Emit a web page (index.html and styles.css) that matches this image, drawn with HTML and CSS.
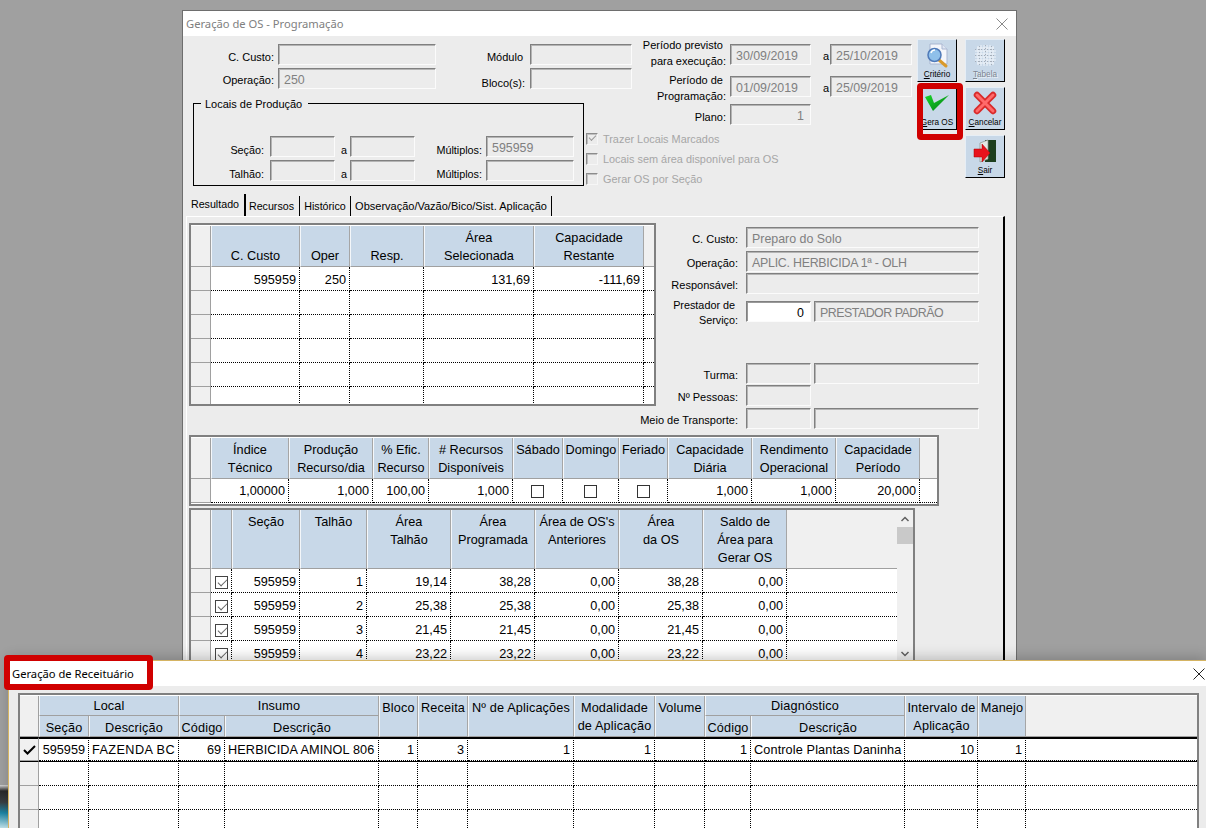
FILE: index.html
```html
<!DOCTYPE html>
<html lang="pt-BR">
<head>
<meta charset="utf-8">
<title>Geração de OS</title>
<link rel="stylesheet" href="styles.css">
</head>
<body>
<div class="desktop">
  <div class="wallpaper-bit"></div>

  <section class="win win1">
    <header class="titlebar inactive">
      <span class="ttl">Geração de OS - Programação</span>
      <svg class="close" width="12" height="12" viewBox="0 0 12 12"><path d="M.5.5l11 11M11.5.5l-11 11" stroke="#8a8a8a" fill="none"/></svg>
    </header>

    <div class="top">
      <div class="a-fields">
        <div class="lb l1">C. Custo:</div><div class="fd"></div><div class="lb l2 lmod">Módulo</div><div class="fd"></div>
        <div class="lb l1 lo">Operação:</div><div class="fd">250</div><div class="lb l2 lbl">Bloco(s):</div><div class="fd"></div>
      </div>

      <div class="a-group">
        <div class="legend">Locais de Produção</div>
        <div class="grow">
          <div class="lb g1">Seção:</div><div class="fd w65"></div><div class="lb ga">a</div><div class="fd w65"></div><div class="lb g2">Múltiplos:</div><div class="fd w88">595959</div>
        </div>
        <div class="grow">
          <div class="lb g1">Talhão:</div><div class="fd w65"></div><div class="lb ga">a</div><div class="fd w65"></div><div class="lb g2">Múltiplos:</div><div class="fd w88"></div>
        </div>
      </div>

      <div class="a-period">
        <div class="prow">
          <div class="lb pl">Período previsto&nbsp;<br>para execução:</div><div class="fd w81">30/09/2019</div><div class="lb pa">a</div><div class="fd w82">25/10/2019</div>
        </div>
        <div class="prow pr2">
          <div class="lb pl">Período de&nbsp;<br>Programação:</div><div class="fd w81">01/09/2019</div><div class="lb pa">a</div><div class="fd w82">25/09/2019</div>
        </div>
        <div class="prow pr3">
          <div class="lb pl">Plano:</div><div class="fd w81 num">1</div>
        </div>
      </div>

      <div class="a-checks">
        <div class="chk"><span class="dbox on"></span>Trazer Locais Marcados</div>
        <div class="chk"><span class="dbox"></span>Locais sem área disponível para OS</div>
        <div class="chk"><span class="dbox"></span>Gerar OS por Seção</div>
      </div>

      <div class="a-btns">
        <button class="tbtn">
          <svg width="38" height="28" viewBox="0 0 38 28">
            <path d="M12 3h12l5 5v15H12z" fill="#f4f6fb" stroke="#a9b6d0"/>
            <path d="M24 3v5h5" fill="#dfe6f3" stroke="#a9b6d0"/>
            <path d="M21 19l7 6" stroke="#d99a2b" stroke-width="3" stroke-linecap="round"/>
            <circle cx="16.500" cy="14" r="6.500" fill="#8fc0ea" stroke="#4f79b8" stroke-width="1.500"/>
            <path d="M13 12a4 4 0 0 1 4-3" stroke="#fff" fill="none" stroke-width="1.500"/>
          </svg>
          <span class="bl"><u>C</u>ritério</span>
        </button>
        <button class="tbtn off">
          <svg width="38" height="28" viewBox="0 0 38 28">
            <path d="M11 7h17M9 10h21M9 13h21M9 16h21M9 19h21M11 22h17M12 5v19M15 4v21M18 4v21M21 4v21M24 4v21M27 5v19" stroke="#eef3f9" stroke-width="1" fill="none"/>
            <path d="M9 8.500h21M9 14.500h21M9 20.500h21" stroke="#a5adb8" stroke-width="1" stroke-dasharray="1 2" fill="none"/>
            <path d="M13.500 5v19M19.500 4v21M25.500 5v19" stroke="#a5adb8" stroke-width="1" stroke-dasharray="1 2" fill="none"/>
          </svg>
          <span class="bl"><u>T</u>abela</span>
        </button>
        <div class="gera-wrap">
          <button class="tbtn">
            <svg width="38" height="28" viewBox="0 0 38 28">
              <defs><linearGradient id="gk" x1="0" y1="0" x2="1" y2="1"><stop offset="0" stop-color="#19d62a"/><stop offset="1" stop-color="#007a12"/></linearGradient></defs>
              <path d="M7 8l6-2 3 8L31 6 15 22z" fill="url(#gk)"/>
            </svg>
            <span class="bl"><u>G</u>era OS</span>
          </button>
          <div class="ring"></div>
        </div>
        <button class="tbtn">
          <svg width="38" height="28" viewBox="0 0 38 28">
            <path d="M11 6l16 16M27 6L11 22" stroke="#d92a2a" stroke-width="6.500" stroke-linecap="round"/>
            <path d="M11 6l16 16M27 6L11 22" stroke="#ff6a6a" stroke-width="3" stroke-linecap="round"/>
          </svg>
          <span class="bl"><u>C</u>ancelar</span>
        </button>
        <button class="tbtn sair">
          <svg width="38" height="28" viewBox="0 0 38 28">
            <path d="M19 3h11v22H19z" fill="#1d3f1f"/>
            <path d="M14 6l8-3v19l-8 3z" fill="#e4e8e4" stroke="#8a938a" stroke-width=".7"/>
            <path d="M8 12h8V7l8 9-8 9v-5H8z" fill="#e8121c" stroke="#a00" stroke-width=".5"/>
          </svg>
          <span class="bl"><u>S</u>air</span>
        </button>
      </div>
    </div>

    <nav class="tabs">
      <div class="tab act t-a">Resultado</div>
      <div class="tab t-b">Recursos</div>
      <div class="tab t-c">Histórico</div>
      <div class="tab t-d">Observação/Vazão/Bico/Sist. Aplicação</div>
    </nav>

    <div class="page">
      <div class="row1">
        <div class="tbl t1">
          <div class="grid g1col">
            <div class="h0"></div><div class="h">C. Custo</div><div class="h">Oper</div><div class="h">Resp.</div><div class="h">Área<br>Selecionada</div><div class="h">Capacidade<br>Restante</div><div class="h0 hf"></div>
            <div class="i"></div><div class="c r">595959</div><div class="c r">250</div><div class="c"></div><div class="c r">131,69</div><div class="c r">-111,69</div><div class="c e"></div>
            <div class="i"></div><div class="c"></div><div class="c"></div><div class="c"></div><div class="c"></div><div class="c"></div><div class="c e"></div>
            <div class="i"></div><div class="c"></div><div class="c"></div><div class="c"></div><div class="c"></div><div class="c"></div><div class="c e"></div>
            <div class="i"></div><div class="c"></div><div class="c"></div><div class="c"></div><div class="c"></div><div class="c"></div><div class="c e"></div>
            <div class="i"></div><div class="c"></div><div class="c"></div><div class="c"></div><div class="c"></div><div class="c"></div><div class="c e"></div>
            <div class="i"></div><div class="c"></div><div class="c"></div><div class="c"></div><div class="c"></div><div class="c"></div><div class="c e"></div>
          </div>
        </div>

        <div class="rp">
          <div class="rr"><div class="lb rl">C. Custo:</div><div class="fd w233">Preparo do Solo</div></div>
          <div class="rr mt3"><div class="lb rl">Operação:</div><div class="fd w233 tight1">APLIC. HERBICIDA 1ª - OLH</div></div>
          <div class="rr mt1"><div class="lb rl">Responsável:</div><div class="fd w233"></div></div>
          <div class="rr mt7"><div class="lb rl rl2">Prestador de&nbsp;<br>Serviço:</div><div class="fd w65 live">0</div><div class="fd w165 tight2">PRESTADOR PADRÃO</div></div>
          <div class="rr mt41"><div class="lb rl">Turma:</div><div class="fd w65"></div><div class="fd w165"></div></div>
          <div class="rr mt1"><div class="lb rl">Nº Pessoas:</div><div class="fd w65"></div></div>
          <div class="rr mt2"><div class="lb rl">Meio de Transporte:</div><div class="fd w65"></div><div class="fd w165"></div></div>
        </div>
      </div>

      <div class="tbl t2">
        <div class="grid g2col">
          <div class="h0"></div><div class="h">Índice<br>Técnico</div><div class="h">Produção<br>Recurso/dia</div><div class="h">% Efic.<br>Recurso</div><div class="h"># Recursos<br>Disponíveis</div><div class="h">Sábado</div><div class="h">Domingo</div><div class="h">Feriado</div><div class="h">Capacidade<br>Diária</div><div class="h">Rendimento<br>Operacional</div><div class="h">Capacidade<br>Período</div><div class="h0 hf"></div>
          <div class="i"></div><div class="c r">1,00000</div><div class="c r">1,000</div><div class="c r">100,00</div><div class="c r">1,000</div><div class="c m"><span class="cb"></span></div><div class="c m"><span class="cb"></span></div><div class="c m"><span class="cb"></span></div><div class="c r">1,000</div><div class="c r">1,000</div><div class="c r">20,000</div><div class="c e"></div>
        </div>
      </div>

      <div class="tbl t3">
        <div class="grid g3col">
          <div class="h0"></div><div class="h"></div><div class="h">Seção</div><div class="h">Talhão</div><div class="h">Área<br>Talhão</div><div class="h">Área<br>Programada</div><div class="h">Área de OS's<br>Anteriores</div><div class="h">Área<br>da OS</div><div class="h">Saldo de<br>Área para<br>Gerar OS</div><div class="h0 hf"></div>
          <div class="i"></div><div class="c m"><span class="cb on"></span></div><div class="c r">595959</div><div class="c r">1</div><div class="c r">19,14</div><div class="c r">38,28</div><div class="c r">0,00</div><div class="c r">38,28</div><div class="c r">0,00</div><div class="c e"></div>
          <div class="i"></div><div class="c m"><span class="cb on"></span></div><div class="c r">595959</div><div class="c r">2</div><div class="c r">25,38</div><div class="c r">25,38</div><div class="c r">0,00</div><div class="c r">25,38</div><div class="c r">0,00</div><div class="c e"></div>
          <div class="i"></div><div class="c m"><span class="cb on"></span></div><div class="c r">595959</div><div class="c r">3</div><div class="c r">21,45</div><div class="c r">21,45</div><div class="c r">0,00</div><div class="c r">21,45</div><div class="c r">0,00</div><div class="c e"></div>
          <div class="i"></div><div class="c m"><span class="cb on"></span></div><div class="c r">595959</div><div class="c r">4</div><div class="c r">23,22</div><div class="c r">23,22</div><div class="c r">0,00</div><div class="c r">23,22</div><div class="c r">0,00</div><div class="c e"></div>
        </div>
        <div class="sbar">
          <svg class="arr" width="16" height="17" viewBox="0 0 16 17"><path d="M4.500 11L8 7.500 11.500 11" stroke="#606060" stroke-width="1.500" fill="none"/></svg>
          <div class="thumb"></div>
          <svg class="arr dn" width="16" height="17" viewBox="0 0 16 17"><path d="M4.500 6L8 9.500 11.500 6" stroke="#606060" stroke-width="1.500" fill="none"/></svg>
        </div>
      </div>
    </div>
  </section>

  <section class="win win2">
    <header class="titlebar">
      <span class="ttl">Geração de Receituário</span>
      <svg class="close" width="12" height="12" viewBox="0 0 12 12"><path d="M.5.5l11 11M11.5.5l-11 11" stroke="#222" fill="none"/></svg>
    </header>
    <div class="w2body">
      <div class="tbl t4">
        <div class="grid g4col">
          <div class="h0 rs2"></div><div class="h cs2">Local</div><div class="h cs2">Insumo</div><div class="h rs2">Bloco</div><div class="h rs2">Receita</div><div class="h rs2">Nº de Aplicações</div><div class="h rs2">Modalidade<br>de Aplicação</div><div class="h rs2">Volume</div><div class="h cs2">Diagnóstico</div><div class="h rs2">Intervalo de<br>Aplicação</div><div class="h rs2">Manejo</div><div class="h0 hf rs2"></div>
          <div class="h sub">Seção</div><div class="h sub">Descrição</div><div class="h sub">Código</div><div class="h sub">Descrição</div><div class="h sub">Código</div><div class="h sub">Descrição</div>

          <div class="i sel"><svg width="13" height="10" viewBox="0 0 13 10"><path d="M1 5l3.500 3.500L12 1" stroke="#000" stroke-width="2" fill="none"/></svg></div><div class="c r sel">595959</div><div class="c l sel wide">FAZENDA BC</div><div class="c r sel">69</div><div class="c l sel">HERBICIDA AMINOL 806</div><div class="c r sel">1</div><div class="c r sel">3</div><div class="c r sel">1</div><div class="c r sel">1</div><div class="c sel"></div><div class="c r sel">1</div><div class="c l sel">Controle Plantas Daninha</div><div class="c r sel">10</div><div class="c r sel">1</div><div class="c e sel"></div>

          <div class="i aft"></div><div class="c aft"></div><div class="c aft"></div><div class="c aft"></div><div class="c aft"></div><div class="c aft"></div><div class="c aft"></div><div class="c aft"></div><div class="c aft"></div><div class="c aft"></div><div class="c aft"></div><div class="c aft"></div><div class="c aft"></div><div class="c aft"></div><div class="c e aft"></div>

          <div class="i"></div><div class="c"></div><div class="c"></div><div class="c"></div><div class="c"></div><div class="c"></div><div class="c"></div><div class="c"></div><div class="c"></div><div class="c"></div><div class="c"></div><div class="c"></div><div class="c"></div><div class="c"></div><div class="c e"></div>

          <div class="i"></div><div class="c"></div><div class="c"></div><div class="c"></div><div class="c"></div><div class="c"></div><div class="c"></div><div class="c"></div><div class="c"></div><div class="c"></div><div class="c"></div><div class="c"></div><div class="c"></div><div class="c"></div><div class="c e"></div>
        </div>
      </div>
    </div>
    <div class="ring ring2"></div>
  </section>
</div>
</body>
</html>
```
FILE: styles.css
```css
* { box-sizing: border-box; }
html, body { margin: 0; padding: 0; }
body { font-family: "Liberation Sans", Arial, sans-serif; font-size: 10.7px; color: #000; }

.desktop { position: relative; width: 1206px; height: 828px; overflow: hidden; background: #a0a0a0; }
.wallpaper-bit { position: absolute; left: 0; top: 785px; width: 8px; height: 43px;
  background: linear-gradient(180deg, #d8d8d8 0, #2a2a2a 14%, #3a3f42 40%, #1b86a6 65%, #bfe0e8 100%); }

.win { position: absolute; background: #ececec; display: flex; flex-direction: column; }
.win1 { left: 182px; top: 10px; width: 835px; height: 720px; border: 1px solid #6e6e6e; }
.win2 { left: 8px; top: 660px; width: 1198px; height: 168px; border-top: 1px solid #d5b463; border-left: 1px solid #d5b463;
  box-shadow: 0 -3px 12px rgba(0,0,0,.2); }

.titlebar { height: 25px; flex: none; background: #fff; display: flex; align-items: center; justify-content: space-between;
  font-family: "Noto Sans", sans-serif; font-size: 11.2px; padding-left: 3px; }
.titlebar.inactive { color: #808080; }
.win1 .close { margin-right: 8px; }
.win2 .titlebar { padding-left: 3px; }
.win2 .close { margin-right: 1px; }

/* top of the form */
.top { height: 158px; flex: none; display: grid; grid-template-columns: 401px 56px 272px 1fr; grid-template-rows: 67px 30px 61px; }
.lb { white-space: nowrap; }
.fd { height: 21px; flex: none; border: 1px solid; border-color: #808080 #fbfbfb #fbfbfb #808080; box-shadow: inset 1px 1px 0 #b4b4b4;
  background: #ececec; color: #808080; font-size: 12.4px; line-height: 22px; padding-left: 5px; white-space: nowrap; overflow: hidden; }
.fd.num { text-align: right; padding: 0 6px 0 0; }
.fd.live { background: #fff; color: #000; text-align: right; padding: 0 6px 0 0; box-shadow: inset 1px 1px 0 #999; }
.tight1 { letter-spacing: -.25px; }
.tight2 { letter-spacing: -.5px; }
.w65 { width: 65px; } .w81 { width: 81px; } .w82 { width: 82px; } .w88 { width: 88px; } .w165 { width: 165px; margin-left: 3px; } .w233 { width: 233px; }

.a-fields { grid-column: 1 / 3; grid-row: 1; padding-top: 8px; display: grid; grid-template-columns: 91px 158px 86px 102px; grid-auto-rows: 21px; row-gap: 3px; column-gap: 4px; align-items: start; }
.a-fields .lb { text-align: right; padding-top: 7px; font-size: 11px; }
.a-fields .lo { padding-top: 6px; }
.a-fields .l2 { margin-right: 1px; }
.a-fields .lmod { margin-right: 3px; padding-top: 7px; }
.a-fields .lbl { padding-top: 9px; }

.a-group { grid-column: 1; grid-row: 2 / 4; position: relative; margin-left: 10px; height: 83px; border: 1px solid #000; padding-top: 32px; }
.legend { position: absolute; left: 7px; top: -6px; background: #ececec; padding: 0 6px 0 4px; font-size: 11px; line-height: 13px; }
.grow { display: flex; height: 21px; margin-bottom: 3px; }
.grow .lb { padding-top: 8px; font-size: 10.8px; }
.g1 { width: 70px; text-align: right; margin-right: 6px; }
.ga { width: 15px; padding-left: 6px; }
.g2 { width: 67px; text-align: right; margin-right: 4px; }

.a-period { grid-column: 3; grid-row: 1 / 3; padding-top: 8px; }
.prow { display: flex; align-items: center; height: 21px; }
.pr2 { margin-top: 11px; }
.pr3 { margin-top: 7px; }
.pl { width: 86px; margin-right: 4px; text-align: right; line-height: 15.7px; margin-bottom: 1px; font-size: 11px; }
.pr2 .pl { margin-bottom: 0; margin-top: 5px; }
.pr3 .pl { margin-bottom: -6px; }
.pa { width: 19px; padding: 3px 0 0 12px; font-size: 11px; }

.a-checks { grid-column: 2 / 4; grid-row: 3; margin-top: -4px; padding-left: 2px; color: #a6a6a6; font-size: 10.9px; }
.chk { display: flex; align-items: center; height: 20px; white-space: nowrap; }
.dbox { width: 12px; height: 12px; margin-right: 5px; border: 1px solid; border-color: #8c8c8c #f6f6f6 #f6f6f6 #8c8c8c; box-shadow: inset 1px 1px 0 #c0c0c0; position: relative; }
.dbox.on::after { content: ""; position: absolute; left: 2px; top: 1px; width: 6px; height: 3px; border-left: 1px solid #9a9a9a; border-bottom: 1px solid #9a9a9a; transform: rotate(-45deg); }

.a-btns { grid-column: 4; grid-row: 1 / 4; padding: 3px 0 0 5px; display: grid; grid-template-columns: 40px 40px; grid-auto-rows: 43px; column-gap: 8px; row-gap: 5px; }
.tbtn { width: 40px; height: 43px; padding: 0; margin: 0; display: block; background: #c8d8e8; border: 1px solid; border-color: #e6eef6 #000 #000 #e6eef6; font-family: inherit; color: #000; text-align: center; }
.tbtn svg { display: block; }
.bl { display: block; font-size: 8.2px; line-height: 12px; }
.tbtn.off .bl { color: #7d8691; text-shadow: 1px 1px 0 #eef3f8; }
.tbtn.sair { grid-column: 2; }
.gera-wrap { position: relative; width: 40px; height: 43px; }
.ring { position: absolute; left: 0; top: -4px; width: 46px; height: 57px; border: 6px solid #d00000; border-radius: 4px; pointer-events: none; }

/* tabs */
.tabs { display: flex; height: 22px; flex: none; margin-left: 5px; font-size: 10.7px; }
.tab { border-right: 1px solid #000; margin-top: 2px; text-align: center; white-space: nowrap; line-height: 21px; }
.tab.act { margin-top: 0; line-height: 21px; border-right-width: 2px; }
.t-a { width: 58px; padding-right: 2px; } .t-b { width: 54px; padding-right: 2px; } .t-c { width: 51px; } .t-d { width: 201px; font-size: 11px; }

.page { margin-left: 3px; width: 819px; flex: 1; border-top: 1px solid #fff; border-left: 1px solid #fff; border-right: 2px solid #000; padding: 6px 0 0 2px; }
.row1 { display: flex; align-items: flex-start; }

.tbl { border: 2px solid #808080; background: #fff; overflow: hidden; flex: none; }
.t1 { width: 467px; height: 183px; padding-top: 1px; }
.t2 { width: 750px; height: 71px; padding-top: 1px; margin-top: 6px; }
.t3 { width: 726px; height: 157px; margin-top: 2px; display: flex; }
.t4 { width: 1181px; height: 140px; padding-top: 1px; }

.grid { display: grid; font-size: 12.7px; line-height: 18px; }
.g1col { grid-template-columns: 20px 89px 50px 74px 110px 110px 1fr; grid-template-rows: 41px repeat(6, 24px); }
.g2col { grid-template-columns: 20px 78px 84px 56px 84px 50px 56px 49px 84px 84px 84px 1fr; grid-template-rows: 41px 24px; }
.g3col { flex: 1; grid-template-columns: 20px 21px 68px 67px 84px 84px 84px 84px 84px 1fr; grid-template-rows: 59px repeat(4, 24px); }
.g4col { grid-template-columns: 19px 50px 90px 46px 154px 39px 50px 106px 81px 50px 46px 154px 73px 48px 1fr; grid-template-rows: 20px 21px 24px 25px 24px 24px; }

.h { background: #c8d8e8; border-right: 1px solid #a6a6a6; border-left: 1px solid #f4f7fa; border-bottom: 1px solid #a0a0a0; text-align: center; padding-top: 2px; white-space: nowrap; }
.h0 { background: #f0f0f0; border-right: 1px solid #a0a0a0; border-bottom: 1px solid #a0a0a0; }
.hf { border-right: 0; }
.t1 .h { display: flex; flex-direction: column; justify-content: flex-end; padding: 0 0 1px; }
.t3 .h { padding-top: 3px; }
.t2 .h { padding-top: 3px; }
.t4 .h { padding-top: 1px; letter-spacing: .15px; }
.t4 .h.sub { padding-top: 3px; }
.t4 .rs2.h { padding-top: 3px; }
.cs2 { grid-column: span 2; }
.rs2 { grid-row: span 2; }

.i { background: #f0f0f0; border-right: 1px solid #a0a0a0; border-bottom: 1px solid #a0a0a0; }
.c { background: #fff; border-right: 1px dotted #000; border-bottom: 1px dotted #000; line-height: 26px; white-space: nowrap; overflow: hidden; }
.c.r { text-align: right; padding-right: 3px; }
.c.l { padding-left: 3px; letter-spacing: .12px; }
.c.m { display: flex; align-items: center; justify-content: center; padding-top: 1px; }
.c.e { border-right: 0; }
.t3 .c.m { padding: 3px 0 0 1px; }
.t2 .c { line-height: 24px; }
.sel { border-top: 2px solid #000; }
.c.sel { line-height: 22px; }
.c.wide { letter-spacing: .4px; }
.i.sel { display: flex; align-items: center; justify-content: center; background: #f0f0f0; }
.aft { border-top: 1px solid #000; }

.cb { display: block; width: 13px; height: 13px; border: 1px solid #333; background: #fff; position: relative; }
.t3 .cb { border-color: #444; }
.cb.on::after { content: ""; position: absolute; left: 2px; top: 2px; width: 8px; height: 4px; border-left: 1px solid #666; border-bottom: 1px solid #666; transform: rotate(-45deg); }

.sbar { width: 16px; flex: none; background: #f0f0f0; display: flex; flex-direction: column; }
.arr { display: block; flex: none; }
.thumb { height: 17px; background: #c9c9c9; flex: none; }
.arr.dn { margin-top: auto; }

/* right panel */
.rp { flex: none; padding-top: 4px; }
.rr { display: flex; align-items: center; height: 21px; }
.rl { width: 82px; margin-right: 8px; display: flex; justify-content: flex-end; text-align: right; padding-top: 2px; font-size: 11px; }
.rl2 { line-height: 15.5px; padding-top: 3px; font-size: 10.8px; }
.mt1 { margin-top: 1px; } .mt2 { margin-top: 2px; } .mt3 { margin-top: 3px; } .mt7 { margin-top: 7px; } .mt41 { margin-top: 41px; }

/* window 2 */
.w2body { padding: 7px 0 0 9px; flex: 1; }
.ring2 { left: -5px; top: -6px; width: 149px; height: 35px; }
```
